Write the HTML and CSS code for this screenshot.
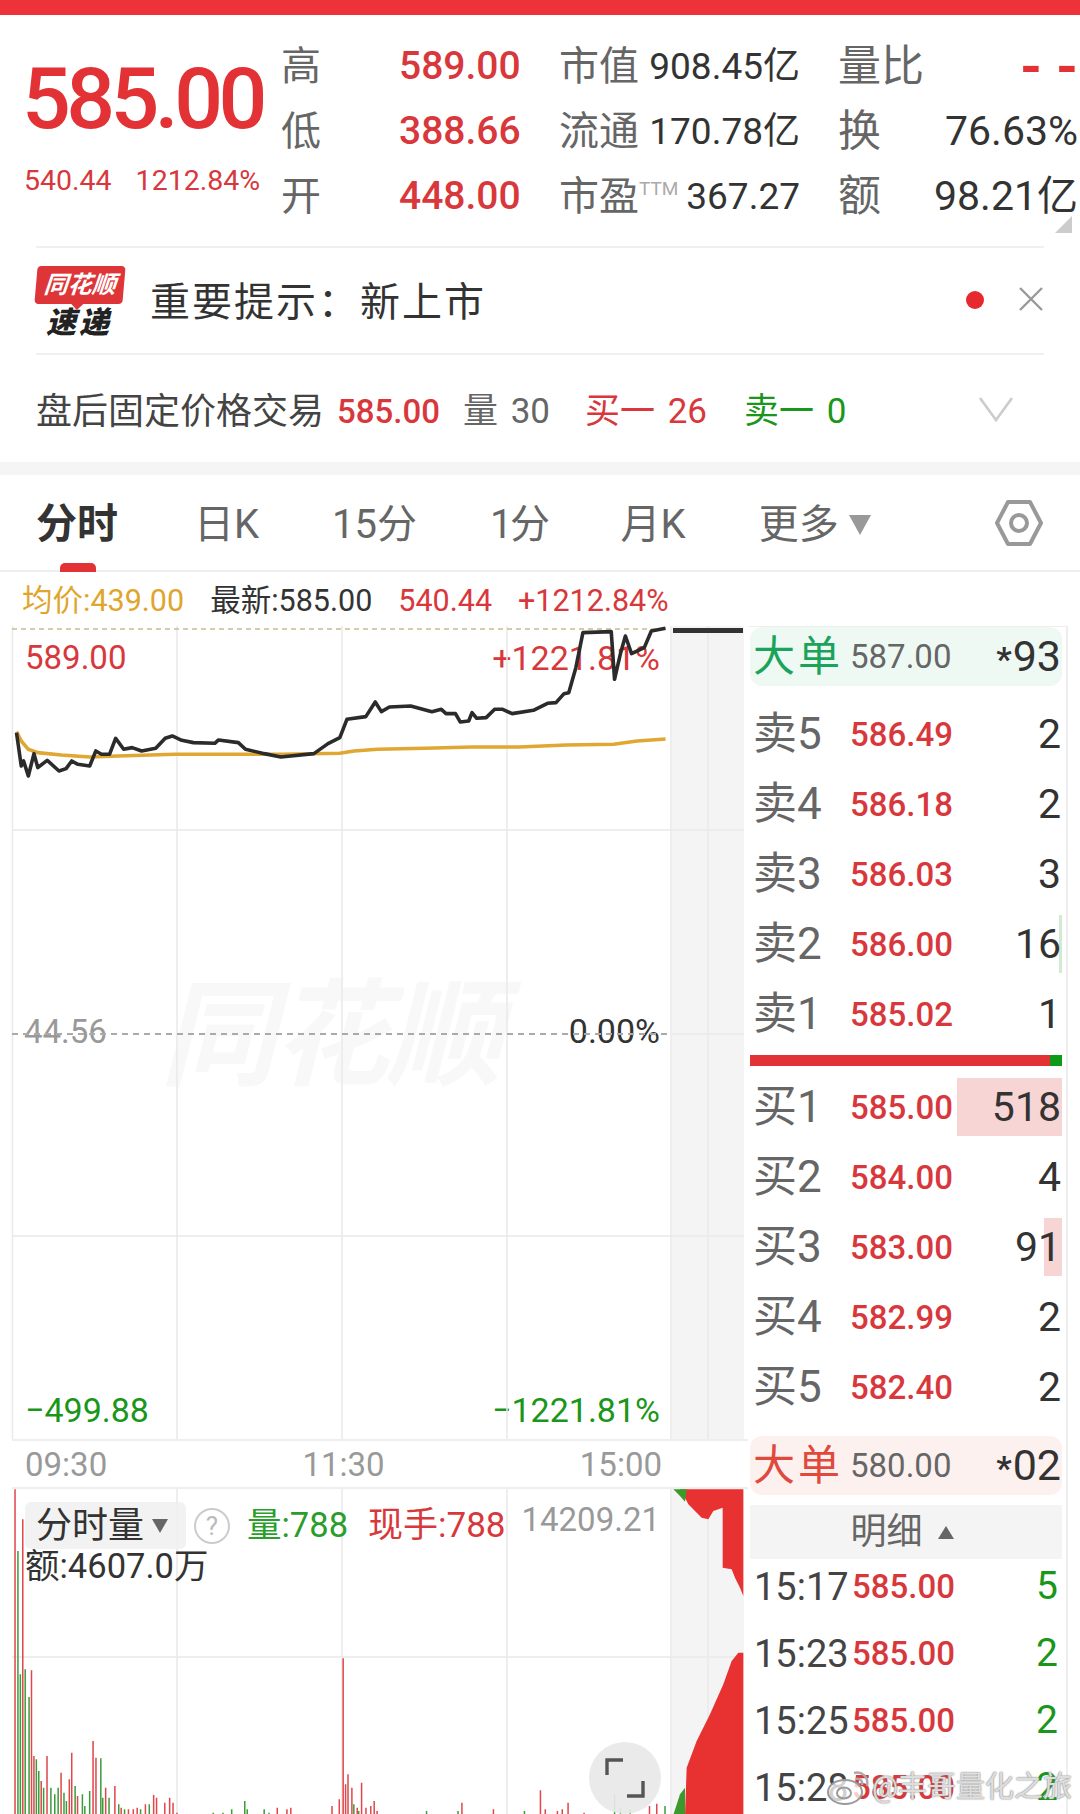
FILE: index.html
```html
<!DOCTYPE html>
<html>
<head>
    <meta charset="utf-8">
    <title>分时</title>
    <link rel="stylesheet" href="styles.css">
</head>
<body>
    <div class="topbar"></div>

    <section class="quote">
        <div class="price-box">
            <div class="price-big">585.00</div>
            <div class="price-change"><span>540.44</span><span>1212.84%</span></div>
        </div>
        <div class="stats">
            <span class="stat-label">高</span><span class="stat-red">589.00</span>
            <div class="stat-cell mid"><span class="stat-label">市值</span><span class="stat-val">908.45亿</span></div>
            <div class="stat-cell right"><span class="stat-label">量比</span><span class="stat-dash">- -</span></div>

            <span class="stat-label">低</span><span class="stat-red">388.66</span>
            <div class="stat-cell mid"><span class="stat-label">流通</span><span class="stat-val">170.78亿</span></div>
            <div class="stat-cell right"><span class="stat-label">换</span><span class="stat-val">76.63%</span></div>

            <span class="stat-label">开</span><span class="stat-red">448.00</span>
            <div class="stat-cell mid"><span class="stat-label">市盈<sup class="ttm">TTM</sup></span><span class="stat-val">367.27</span></div>
            <div class="stat-cell right"><span class="stat-label">额</span><span class="stat-val">98.21亿</span></div>
        </div>
        <div class="corner"></div>
    </section>

    <section class="notice">
        <div class="logo">
            <div class="logo-flag">同花顺</div>
            <div class="logo-sub">速递</div>
        </div>
        <div class="notice-text">重要提示：新上市</div>
        <div class="notice-dot"></div>
        <svg class="notice-close" width="24" height="24" viewBox="0 0 24 24"><path d="M1 1 23 23M23 1 1 23" stroke="#999" stroke-width="2.4" fill="none"/></svg>
    </section>

    <section class="after">
        <span class="after-title">盘后固定价格交易</span>
        <span class="after-price">585.00</span>
        <span class="after-vol">量 30</span>
        <span class="after-buy">买一 26</span>
        <span class="after-sell">卖一 0</span>
        <svg class="after-arrow" width="36" height="28" viewBox="0 0 36 28"><path d="M2 3 18 25 34 3" stroke="#ccc" stroke-width="2.6" fill="none"/></svg>
    </section>

    <div class="band"></div>

    <nav class="tabs">
        <span class="tab active">分时</span>
        <span class="tab">日K</span>
        <span class="tab">15分</span>
        <span class="tab tab-narrow">1分</span>
        <span class="tab">月K</span>
        <span class="tab">更多<i class="tab-caret"></i></span>
        <svg class="tab-gear" width="50" height="48" viewBox="0 0 50 48"><path d="M3 24 14 3H36L47 24 36 45H14Z" stroke="#999" stroke-width="4" stroke-linejoin="round" fill="none"/><circle cx="25" cy="24" r="8" stroke="#999" stroke-width="4" fill="none"/></svg>
    </nav>

    <div class="legend">
        <span class="gold">均价:439.00</span>
        <span class="dark">最新:585.00</span>
        <span class="red">540.44</span>
        <span class="red">+1212.84%</span>
    </div>

    <main class="main">
        <div class="charts">
            <div class="price-chart">
                <div class="wm-logo">同花顺</div>
                <span class="ch-label tl red">589.00</span>
                <span class="ch-label tr red">+1221.81%</span>
                <span class="ch-label ml grey">44.56</span>
                <span class="ch-label mr dark">0.00%</span>
                <span class="ch-label bl green">−499.88</span>
                <span class="ch-label br green">−1221.81%</span>
                <svg class="chart-svg" width="748" height="813" viewBox="0 0 748 813">
                    <rect x="672" y="0" width="72" height="813" fill="#f4f4f4"/>
                    <path d="M12.5 0V813M177 0V813M342 0V813M507 0V813M671 0V813M708 0V813" stroke="#e9e9e9" stroke-width="1.5" fill="none"/>
                    <path d="M12 204H744M12 610H744M672 408H744" stroke="#e9e9e9" stroke-width="1.5" fill="none"/>
                    <path d="M12 3H668" stroke="#c9bb95" stroke-width="1.5" stroke-dasharray="5 4" fill="none"/>
                    <path d="M12 408H668" stroke="#aaa" stroke-width="2" stroke-dasharray="6 5" fill="none"/>
                    <path d="M673 4.5H743" stroke="#333" stroke-width="5" fill="none"/>
                    <g transform="translate(0 -155) scale(.472 .3333)" fill="none" stroke-linejoin="round">
                        <polyline vector-effect="non-scaling-stroke" stroke="#e0a733" stroke-width="3.6" points="35,782 45,810 60,835 80,845 130,852 190,858 250,855 370,850 500,850 600,850 720,847 750,840 800,835 900,832 1000,828 1100,828 1200,822 1300,820 1350,810 1410,804"/>
                        <polyline vector-effect="non-scaling-stroke" stroke="#2b2b2b" stroke-width="3.6" points="35,785 45,885 50,870 60,915 72,848 80,890 100,868 125,900 140,893 152,870 165,880 190,885 203,840 215,850 232,850 245,802 262,835 280,830 300,840 330,832 350,802 365,795 385,808 410,815 455,817 463,807 505,815 520,835 560,848 595,858 665,848 695,818 720,800 735,745 775,737 795,693 808,722 825,708 870,705 915,722 935,715 945,728 965,728 975,753 993,750 1000,725 1010,742 1030,740 1048,715 1065,715 1085,728 1130,718 1160,697 1178,695 1195,668 1205,665 1220,590 1235,485 1295,482 1302,625 1315,545 1325,495 1338,548 1365,530 1380,480 1410,472"/>
                    </g>
                </svg>
            </div>

            <div class="time-axis"><span>09:30</span><span>11:30</span><span>15:00</span></div>

            <div class="vol-chart">
                <svg class="chart-svg" width="748" height="326" viewBox="0 0 748 326">
                    <rect x="672" y="0" width="72" height="326" fill="#f4f4f4"/>
                    <path d="M177 0V326M342 0V326M507 0V326M671 0V326M708 0V326M12 168H744" stroke="#e9e9e9" stroke-width="1.5" fill="none"/>
                    <g transform="translate(0 -68) scale(.4847 .3333)" fill="none">
                        <path vector-effect="non-scaling-stroke" stroke="#e0464a" stroke-width="1.5" d="M31 205V1182M47 295V1182M65 748V1182M70 1005V1182M85 1080V1182M97 1005V1182M126 1055V1182M143 1075V1182M148 995V1182M160 1125V1182M192 960V1182M198 1010V1182M218 1100V1182M237 1095V1182M250 1160V1182M265 1165V1182M275 1165V1182M283 1160V1182M300 1150V1182M317 1122V1182M323 1130V1182M340 1145V1182M350 1130V1182M357 1145V1182M365 1175V1182M572 1160V1182M592 1165V1182M600 1160V1182M685 1155V1182M700 1135V1182M708 712V1182M713 1090V1182M718 1060V1182M726 1100V1182M737 1160V1182M746 1085V1182M755 1160V1182M765 1155V1182M772 1140V1182M778 1170V1182M953 1145V1182M1018 1165V1182M1115 1108V1182M1125 1165V1182M1150 1170V1182M1160 1165V1182M1172 1145V1182M1205 1175V1182M1340 1155V1182M1355 1148V1182"/>
                        <path vector-effect="non-scaling-stroke" stroke="#3d9a3d" stroke-width="1.5" d="M37 390V1182M42 760V1182M52 745V1182M60 828V1182M75 1015V1182M80 1050V1182M90 1100V1182M105 1100V1182M113 1120V1182M120 1100V1182M132 1115V1182M137 1140V1182M155 1095V1182M170 1120V1182M175 1155V1182M185 1110V1182M208 1012V1182M212 1130V1182M225 1130V1182M245 1150V1182M257 1165V1182M290 1165V1182M308 1150V1182M440 1175V1182M460 1175V1182M478 1165V1182M505 1140V1182M510 1165V1182M545 1165V1182M555 1175V1182M730 1150V1182M740 1170V1182M880 1170V1182M945 1170V1182M1082 1170V1182M1268 1120V1182M1280 1160V1182M1300 1165V1182M1372 1155V1182"/>
                    </g>
                    <g transform="translate(660 -68) scale(.3333)">
                        <polygon fill="#e83232" points="40,205 250,205 250,525 240,500 225,470 215,445 188,440 188,260 160,270 145,295 125,290 105,270 85,250 75,230 60,205"/>
                        <polygon fill="#3a9a2c" points="40,205 80,205 75,242 60,225"/>
                        <polygon fill="#e83232" points="250,695 235,695 215,720 190,790 150,880 110,960 80,1040 75,1182 250,1182"/>
                        <polygon fill="#3a9a2c" points="75,1100 60,1120 40,1182 75,1182"/>
                    </g>
                </svg>
                <div class="vol-head">
                    <span class="vol-pill">分时量<i class="vol-caret"></i></span>
                    <span class="vol-help">?</span>
                    <span class="vol-green">量:788</span>
                    <span class="vol-red">现手:788</span>
                    <span class="vol-max">14209.21</span>
                </div>
                <div class="vol-amount">额:4607.0万</div>
                <div class="full-btn">
                    <svg width="72" height="72" viewBox="0 0 72 72"><path d="M18 33V18H34M54 39V54H38" stroke="#555" stroke-width="3.4" fill="none"/></svg>
                </div>
            </div>
        </div>

        <aside class="book">
            <div class="big-order buy-big"><span class="big-name">大单</span><span class="big-price">587.00</span><span class="big-qty"><b>*</b>93</span></div>

            <div class="rows sells">
                <div class="book-row"><span class="lvl">卖5</span><span class="bp">586.49</span><span class="bq">2</span></div>
                <div class="book-row"><span class="lvl">卖4</span><span class="bp">586.18</span><span class="bq">2</span></div>
                <div class="book-row"><span class="lvl">卖3</span><span class="bp">586.03</span><span class="bq">3</span></div>
                <div class="book-row"><span class="lvl">卖2</span><span class="bp">586.00</span><i class="qbar green-bar" style="width: 3px"></i><span class="bq">16</span></div>
                <div class="book-row"><span class="lvl">卖1</span><span class="bp">585.02</span><span class="bq">1</span></div>
            </div>

            <div class="ratio"><i></i></div>

            <div class="rows">
                <div class="book-row"><span class="lvl">买1</span><span class="bp">585.00</span><i class="qbar red-bar" style="width: 105px"></i><span class="bq">518</span></div>
                <div class="book-row"><span class="lvl">买2</span><span class="bp">584.00</span><span class="bq">4</span></div>
                <div class="book-row"><span class="lvl">买3</span><span class="bp">583.00</span><i class="qbar red-bar" style="width: 18px"></i><span class="bq">91</span></div>
                <div class="book-row"><span class="lvl">买4</span><span class="bp">582.99</span><span class="bq">2</span></div>
                <div class="book-row"><span class="lvl">买5</span><span class="bp">582.40</span><span class="bq">2</span></div>
            </div>

            <div class="big-order sell-big"><span class="big-name">大单</span><span class="big-price">580.00</span><span class="big-qty"><b>*</b>02</span></div>

            <div class="detail-head">明细<i class="detail-caret"></i></div>

            <div class="trades">
                <div class="trade"><span class="t-time">15:17</span><span class="t-price">585.00</span><span class="t-qty">5</span></div>
                <div class="trade"><span class="t-time">15:23</span><span class="t-price">585.00</span><span class="t-qty">2</span></div>
                <div class="trade"><span class="t-time">15:25</span><span class="t-price">585.00</span><span class="t-qty">2</span></div>
                <div class="trade"><span class="t-time">15:28</span><span class="t-price">585.00</span><span class="t-qty">2</span></div>
            </div>
        </aside>
    </main>

    <!-- weibo watermark over the corner -->
    <div class="weibo">
        <svg width="46" height="38" viewBox="0 0 46 38"><ellipse cx="19" cy="24" rx="17" ry="12" fill="rgba(255,255,255,.75)" stroke="#999" stroke-width="2"/><ellipse cx="18" cy="25" rx="7" ry="5.5" fill="none" stroke="#999" stroke-width="2"/><path d="M28 5C36 3 43 9 41 18M30 11C34 10 37 13 36 17" stroke="#aaa" stroke-width="2.4" fill="none"/></svg>
        <span>@丰哥量化之旅</span>
    </div>
</body>
</html>
```

FILE: styles.css
```css
* {
    box-sizing: border-box;
}
html, body {
    margin: 0;
    padding: 0;
}
body {
    position: relative;
    width: 1080px;
    height: 1814px;
    overflow: hidden;
    background-color: #fff;
    color: #333;
    font-family: Roboto, "Noto Sans CJK SC", sans-serif;
    line-height: 1;
}
i {
    font-style: normal;
}
.red { color: #d8383c; }
.green { color: #1a961a; }
.grey { color: #999; }
.dark { color: #333; }
.gold { color: #dfa52e; }

.topbar {
    height: 15px;
    background-color: #ee3239;
}

/* head quote */
.quote {
    position: relative;
    display: flex;
    height: 231px;
    margin: 0;
}
.price-box {
    width: 281px;
    padding-left: 22px;
}
.price-big {
    margin-top: 41px;
    font-size: 86px;
    font-weight: 500;
    letter-spacing: -4.6px;
    color: #e23235;
}
.price-change {
    display: flex;
    gap: 24px;
    margin-top: 25px;
    padding-left: 2px;
    font-size: 28.5px;
    color: #d8383c;
}
.stats {
    display: grid;
    grid-template-columns: 118px 160px 279px 240px;
    grid-auto-rows: 65px;
    align-items: center;
    margin-top: 19px;
    width: 799px;
}
.stat-label {
    font-size: 40px;
    color: #666;
}
.stat-red {
    font-size: 39px;
    font-weight: 500;
    color: #d8383c;
}
.stat-val {
    font-size: 37px;
    color: #333;
}
.stat-cell {
    display: flex;
    justify-content: space-between;
    align-items: center;
}
.stat-cell.mid {
    padding-right: 38px;
}
.stat-cell.right .stat-label {
    font-size: 43px;
}
.stat-cell.right .stat-val {
    font-size: 41px;
}
.stat-dash {
    font-size: 56px;
    font-weight: 700;
    color: #e23235;
}
.ttm {
    font-size: 19px;
    vertical-align: 15px;
    color: #aaa;
    line-height: 0;
}
.corner {
    position: absolute;
    right: 8px;
    bottom: 13px;
    width: 17px;
    height: 17px;
    background-color: #ccc;
    clip-path: polygon(100% 0, 100% 100%, 0 100%);
}

/* notice */
.notice {
    display: flex;
    align-items: center;
    height: 109px;
    margin: 0 36px;
    border-top: 2px solid #f0f0f0;
    border-bottom: 2px solid #f0f0f0;
}
.logo {
    width: 90px;
    margin-top: 2px;
}
.logo-flag {
    position: relative;
    width: 88px;
    height: 38px;
    background-color: #de3538;
    border-radius: 4px;
    transform: skewX(-5deg);
    color: #fff;
    font-size: 24px;
    font-weight: 700;
    font-style: italic;
    line-height: 38px;
    text-align: center;
    white-space: nowrap;
}
.logo-flag::after {
    content: "";
    position: absolute;
    left: 36px;
    bottom: -6px;
    border-top: 7px solid #de3538;
    border-left: 7px solid transparent;
    border-right: 7px solid transparent;
}
.logo-sub {
    margin-top: 4px;
    padding-right: 4px;
    font-size: 30px;
    font-weight: 900;
    font-style: italic;
    letter-spacing: 3px;
    color: #222;
    text-align: center;
}
.notice-text {
    margin: 4px 0 0 24px;
    font-size: 40px;
    letter-spacing: 2px;
    color: #333;
}
.notice-dot {
    width: 18px;
    height: 18px;
    margin: 0 0 2px auto;
    border-radius: 50%;
    background-color: #e6292e;
}
.notice-close {
    margin: 0 1px 3px 35px;
}

/* after hours */
.after {
    display: flex;
    align-items: center;
    height: 107px;
    padding: 6px 0 0 36px;
    font-size: 35px;
    word-spacing: 4px;
}
.after-title {
    font-size: 36px;
    color: #444;
    width: 301px;
    white-space: nowrap;
}
.after-price {
    width: 126px;
    font-size: 33px;
    font-weight: 500;
    color: #d8383c;
}
.after-vol {
    width: 122px;
    color: #666;
}
.after-buy {
    width: 159px;
    color: #d8383c;
}
.after-sell {
    color: #1a961a;
}
.after-arrow {
    margin: -6px 66px 0 auto;
}
.band {
    height: 13px;
    background-color: #f5f5f5;
}

/* tabs */
.tabs {
    display: flex;
    align-items: center;
    gap: 73px;
    height: 97px;
    padding: 4px 36px 0 36px;
    border-bottom: 2px solid #eee;
    position: relative;
}
.tab {
    position: relative;
    display: flex;
    align-items: center;
    font-size: 40px;
    color: #666;
    white-space: nowrap;
}
.tab.active {
    margin-right: 3px;
    font-size: 41px;
    font-weight: 700;
    color: #333;
}
.tab-narrow {
    letter-spacing: -2.5px;
}
.tab.active::after {
    content: "";
    position: absolute;
    left: 24px;
    bottom: -27px;
    width: 36px;
    height: 9px;
    border-radius: 5px 5px 0 0;
    background-color: #e23235;
}
.tab-caret {
    width: 0;
    height: 0;
    margin: 0 0 0 10px;
    border-top: 20px solid #999;
    border-left: 11px solid transparent;
    border-right: 11px solid transparent;
}
.tab-gear {
    margin: -4px 0 0 auto;
}

/* legend */
.legend {
    display: flex;
    align-items: center;
    height: 54px;
    padding: 4px 0 0 22px;
    font-size: 30.5px;
}
.legend span {
    margin-right: 26px;
}

/* chart + book */
.main {
    display: flex;
    height: 1189px;
}
.charts {
    width: 748px;
    flex: none;
}
.price-chart {
    position: relative;
    height: 813px;
}
.chart-svg {
    position: absolute;
    left: 0;
    top: 0;
}
.ch-label {
    position: absolute;
    font-size: 34px;
}
.tl { left: 25px; top: 15px; font-size: 33px; }
.tr { right: 88px; top: 15px; }
.ml { left: 24px; top: 389px; font-size: 33px; }
.mr { right: 88px; top: 388px; }
.bl { left: 25px; top: 767px; }
.br { right: 88px; top: 767px; }
.wm-logo {
    position: absolute;
    left: 160px;
    top: 352px;
    font-size: 116px;
    font-weight: 700;
    font-style: italic;
    letter-spacing: -3px;
    color: #f8f8f8;
    white-space: nowrap;
}
.time-axis {
    display: flex;
    justify-content: space-between;
    align-items: center;
    height: 50px;
    margin-left: 12px;
    padding: 0 86px 0 13px;
    border-top: 2px solid #eee;
    border-bottom: 2px solid #eee;
    font-size: 33px;
    color: #999;
}
.vol-chart {
    position: relative;
    height: 326px;
}
.vol-head {
    position: absolute;
    left: 25px;
    top: 13px;
    width: 635px;
    display: flex;
    align-items: center;
}
.vol-pill {
    display: flex;
    align-items: center;
    justify-content: flex-start;
    gap: 8px;
    width: 161px;
    height: 47px;
    padding-left: 11px;
    background-color: rgba(240, 240, 240, 0.85);
    border-radius: 6px;
    font-size: 36px;
    color: #333;
}
.vol-caret {
    border-top: 14px solid #666;
    border-left: 8px solid transparent;
    border-right: 8px solid transparent;
}
.vol-help {
    width: 36px;
    height: 36px;
    margin-left: 8px;
    border: 2px solid #ccc;
    border-radius: 50%;
    font-size: 26px;
    line-height: 32px;
    text-align: center;
    color: #bbb;
}
.vol-green {
    margin-left: 17px;
    font-size: 34.5px;
    color: #2a9d2a;
}
.vol-red {
    margin-left: 20px;
    font-size: 35px;
    color: #d8383c;
}
.vol-max {
    margin-left: auto;
    margin-top: -12px;
    font-size: 33px;
    color: #999;
}
.vol-amount {
    position: absolute;
    left: 25px;
    top: 60px;
    font-size: 34.5px;
    color: #333;
}
.full-btn {
    position: absolute;
    left: 589px;
    top: 253px;
    width: 72px;
    height: 72px;
    border-radius: 50%;
    background-color: rgba(232, 232, 232, 0.92);
}

/* order book */
.book {
    width: 320px;
    height: 1189px;
    padding: 0 4px 0 2px;
    border-top: 1px solid #eee;
    border-right: 2px solid #eee;
}
.big-order {
    display: flex;
    align-items: center;
    height: 59px;
    padding: 0 1px 0 3px;
    border-radius: 12px;
}
.buy-big {
    background-color: #eff9f3;
}
.sell-big {
    margin-top: 14px;
    background-color: #fdf1f0;
}
.big-name {
    width: 97px;
    font-size: 42px;
    letter-spacing: 3px;
    white-space: nowrap;
}
.buy-big .big-name { color: #1aa35a; }
.sell-big .big-name { color: #e0493b; }
.big-price {
    font-size: 33px;
    color: #666;
}
.big-qty {
    margin-left: auto;
    font-size: 43px;
    color: #333;
}
.big-qty b {
    font-size: 34px;
    margin-right: 1px;
}
.sells {
    margin-top: 13px;
}
.book-row {
    position: relative;
    display: flex;
    align-items: center;
    height: 70px;
    padding: 0 1px 0 3px;
}
.lvl {
    position: relative;
    width: 97px;
    font-size: 44px;
    color: #666;
}
.bp {
    position: relative;
    font-size: 33px;
    font-weight: 500;
    color: #d8383c;
}
.bq {
    position: relative;
    margin-left: auto;
    font-size: 41px;
    color: #333;
}
.qbar {
    position: absolute;
    right: 0;
    top: 6px;
    bottom: 6px;
}
.red-bar { background-color: #f8d5d5; }
.green-bar { background-color: #d2e9d2; }
.ratio {
    height: 11px;
    margin: 6px 0;
    background-color: #e23235;
}
.ratio i {
    display: block;
    width: 12px;
    height: 11px;
    margin-left: auto;
    background-color: #0d9a17;
}
.detail-head {
    display: flex;
    align-items: center;
    justify-content: center;
    gap: 15px;
    height: 54px;
    margin-top: 10px;
    padding-right: 8px;
    background-color: #f4f4f4;
    font-size: 36px;
    color: #666;
}
.detail-caret {
    border-bottom: 13px solid #666;
    border-left: 8px solid transparent;
    border-right: 8px solid transparent;
}
.trades {
    margin-top: -6px;
}
.trade {
    display: flex;
    align-items: center;
    height: 67px;
    padding: 0 4px 0 4px;
}
.t-time {
    width: 98px;
    font-size: 38px;
    color: #444;
}
.t-price {
    font-size: 33px;
    font-weight: 500;
    color: #d8383c;
}
.t-qty {
    margin-left: auto;
    font-size: 39px;
    color: #1a961a;
}

.weibo {
    position: absolute;
    left: 826px;
    top: 1768px;
    display: flex;
    align-items: center;
    font-size: 29px;
    color: rgba(255, 255, 255, 0.72);
    text-shadow: 0 0 2px #888, 0 0 1px #888;
    white-space: nowrap;
}
```
